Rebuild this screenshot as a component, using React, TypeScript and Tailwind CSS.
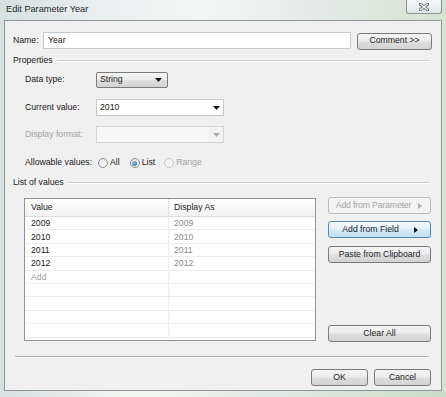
import React from "react";

const btn =
  "relative flex items-center justify-center h-[17px] rounded-[3px] border text-[8.7px]";
const btnNormal =
  "border-[#7a7a7a] text-[#1a1a1a] bg-[linear-gradient(#f4f4f4_0%,#ececec_48%,#dfdfdf_52%,#d2d2d2_100%)]";
const btnHot =
  "border-[#4f88b8] text-[#1a1a1a] bg-[linear-gradient(#f1f8fd_0%,#e3f1fb_48%,#d2e8f7_52%,#c4dff2_100%)]";
const btnDisabled = "border-[#b9bdc0] text-[#a3a3a3] bg-[#f4f4f4]";

// little right-pointing triangle used on the menu buttons
const Arrow = ({ color, className }: { color: string; className: string }) => (
  <svg className={"absolute " + className} width="4" height="6" viewBox="0 0 4 6">
    <path d="M0 0 L4 3 L0 6 Z" fill={color} />
  </svg>
);

const DownArrow = ({ color }: { color: string }) => (
  <svg width="7" height="4" viewBox="0 0 7 4">
    <path d="M0 0 L7 0 L3.5 4 Z" fill={color} />
  </svg>
);

const Radio = ({ checked, disabled }: { checked?: boolean; disabled?: boolean }) => (
  <span
    className={
      "flex items-center justify-center w-[10px] h-[10px] rounded-full border " +
      (disabled
        ? "border-[#c4c6c8] bg-[#f4f4f4]"
        : "border-[#8a8d90] bg-[linear-gradient(135deg,#e4e4e4,#fbfbfb)]")
    }
  >
    {checked && <span className="w-[5px] h-[5px] rounded-full bg-[radial-gradient(circle_at_35%_35%,#8fc3f0,#1f5f9e)]" />}
  </span>
);

const GroupHeader = ({ label }: { label: string }) => (
  <div className="flex items-center h-[12px] pr-[2px]">
    <span className="text-[8.7px] text-[#1a1a1a]">{label}</span>
    <div className="flex-1 ml-[4px] h-[2px] border-t border-t-[#c9cdd0] border-b border-b-white" />
  </div>
);

export default function App() {
  const values = ["2009", "2010", "2011", "2012"];
  const emptyRows = [1, 2, 3, 4];

  return (
    <div
      className="relative w-[446px] h-[397px] overflow-hidden bg-[linear-gradient(90deg,#d7dfe1_0%,#e9eeef_20%,#f3f5f4_45%,#e6ebe9_70%,#d6e2d3_100%)]"
      style={{ fontFamily: '"Liberation Sans", Arial, sans-serif' }}
    >
      {/* title bar */}
      <div className="flex items-start justify-between h-[20px]">
        <span className="pl-[6px] pt-[3px] text-[9.2px] leading-[12px] text-[#1e1e1e]">
          Edit Parameter Year
        </span>
        <div className="mr-[4px] w-[36px] h-[14px] flex items-center justify-center rounded-b-[3px] border border-t-0 border-[#8c9296] bg-[linear-gradient(#f6f8f9,#e1e6e9)]">
          <svg width="10" height="8" viewBox="0 0 10 8">
            <path d="M1 1 L9 7 M9 1 L1 7" stroke="#6d7378" strokeWidth="3" strokeLinecap="square" />
            <path d="M1 1 L9 7 M9 1 L1 7" stroke="#f4f6f7" strokeWidth="1.2" />
          </svg>
        </div>
      </div>

      {/* client area */}
      <div className="mx-[4px] h-[371px] border border-[#8f969a] bg-[#f0f0f0] pl-[8px] pr-[9px] text-[8.7px] text-[#1a1a1a]">
        {/* name row */}
        <div className="flex items-center mt-[11px] h-[17px]">
          <span className="w-[30px]">Name:</span>
          <div className="flex items-center w-[308px] h-[17px] border border-[#c5c8cc] bg-white pl-[4px]">Year</div>
          <div className={btn + " " + btnNormal + " ml-[6px] w-[75px] mt-[1px]"}>Comment &gt;&gt;</div>
        </div>

        <div className="mt-[6px]">
          <GroupHeader label="Properties" />
        </div>

        <div className="pl-[12px]">
          <div className="flex items-center mt-[5px] h-[16px]">
            <span className="w-[71px]">Data type:</span>
            <div className={"flex items-center justify-between w-[72px] h-[16px] rounded-[2px] border border-[#7a7a7a] pl-[3px] pr-[5px] " + btnNormal}>
              <span>String</span>
              <DownArrow color="#111" />
            </div>
          </div>

          <div className="flex items-center mt-[11px] h-[17px]">
            <span className="w-[71px]">Current value:</span>
            <div className="flex items-center justify-between w-[128px] h-[17px] border border-[#c5c8cc] bg-white pl-[3px] pr-[3px]">
              <span>2010</span>
              <DownArrow color="#111" />
            </div>
          </div>

          <div className="flex items-center mt-[10px] h-[17px]">
            <span className="w-[71px] text-[#a3a3a3]">Display format:</span>
            <div className="flex items-stretch w-[128px] h-[17px] border border-[#d3d5d7] bg-[#f2f2f2]">
              <div className="flex-1 bg-[#f7f7f7]" />
              <div className="w-[14px] flex items-center justify-center border-l border-[#ececec]">
                <DownArrow color="#a8a8a8" />
              </div>
            </div>
          </div>

          <div className="flex items-center mt-[14px] h-[12px]">
            <span className="w-[73px]">Allowable values:</span>
            <Radio />
            <span className="ml-[2px]">All</span>
            <span className="ml-[10px]"><Radio checked /></span>
            <span className="ml-[2px]">List</span>
            <span className="ml-[9px]"><Radio disabled /></span>
            <span className="ml-[2px] text-[#a3a3a3]">Range</span>
          </div>
        </div>

        <div className="mt-[8px]">
          <GroupHeader label="List of values" />
        </div>

        {/* table and buttons */}
        <div className="flex mt-[9px] pl-[11px] h-[143px]">
          <div className="w-[292px] h-[143px] border border-[#8e9397] bg-white">
            <div className="grid grid-cols-[144px_1fr] h-[18px] border-b border-[#dcdcdc] bg-[linear-gradient(#ffffff,#f1f2f3)]">
              <div className="flex items-center pl-[6px] border-r border-[#dedede]">Value</div>
              <div className="flex items-center pl-[5px]">Display As</div>
            </div>
            {values.map((v) => (
              <div key={v} className="grid grid-cols-[144px_1fr] h-[13.4px] border-b border-[#ececec] leading-[12px]">
                <div className="flex items-center pl-[6px] border-r border-[#ececec]">{v}</div>
                <div className="flex items-center pl-[5px] text-[#8a8a8a]">{v}</div>
              </div>
            ))}
            <div className="grid grid-cols-[144px_1fr] h-[13.4px] border-b border-[#ececec] leading-[12px]">
              <div className="flex items-center pl-[6px] border-r border-[#ececec] text-[#a3a3a3]">Add</div>
              <div />
            </div>
            {emptyRows.map((r) => (
              <div key={r} className="grid grid-cols-[144px_1fr] h-[13.4px] border-b border-[#ececec]">
                <div className="border-r border-[#ececec]" />
                <div />
              </div>
            ))}
          </div>

          <div className="flex flex-col ml-[12px] w-[103px] -mt-[1px]">
            <div className={btn + " " + btnDisabled + " pr-[12px] tracking-[-0.15px]"}>
              Add from Parameter
              <Arrow color="#b0b0b0" className="right-[8px]" />
            </div>
            <div className={btn + " " + btnHot + " mt-[7px] pr-[18px]"}>
              Add from Field
              <Arrow color="#111" className="right-[12px]" />
            </div>
            <div className={btn + " " + btnNormal + " mt-[8px]"}>Paste from Clipboard</div>
            <div className={btn + " " + btnNormal + " mt-auto mb-[-1px]"}>Clear All</div>
          </div>
        </div>

        {/* separator */}
        <div className="mt-[15px] ml-[2px] mr-[3px] h-[2px] border-t border-t-[#a9adb0] border-b border-b-white" />

        <div className="flex justify-end mt-[11px] pr-[1px]">
          <div className={btn + " " + btnNormal + " w-[57px]"}>OK</div>
          <div className={btn + " " + btnNormal + " w-[57px] ml-[6px]"}>Cancel</div>
        </div>
      </div>

      {/* bottom glare of the aero frame */}
      <div className="h-[6px] bg-[linear-gradient(90deg,#d9e0e2_0%,#f4f6f2_30%,#e3e9e6_60%,#cddcc8_100%)]" />
    </div>
  );
}
